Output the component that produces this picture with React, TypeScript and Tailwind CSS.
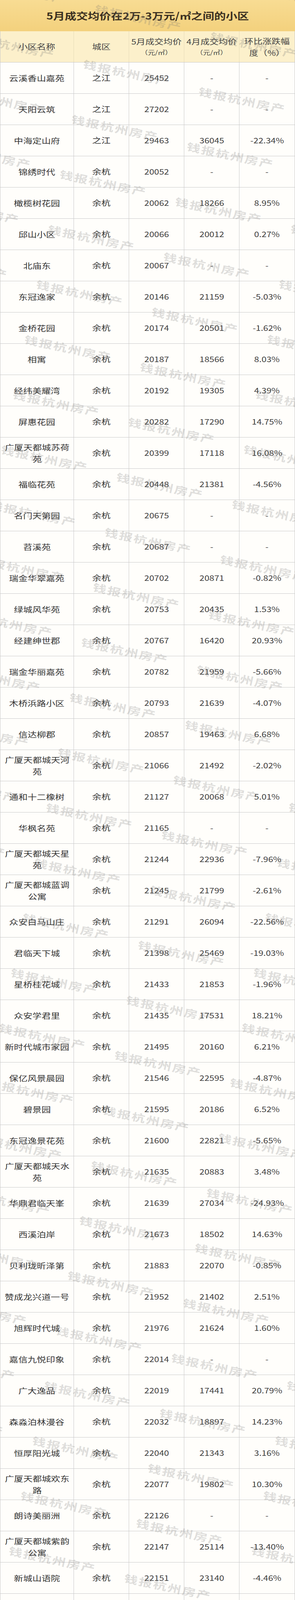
import React from 'react';

type Row = [string, string, string, string, string];

const rows: Row[] = [
    ['云溪香山嘉苑', '之江', '25452', '-', '-'],
    ['天阳云筑', '之江', '27202', '-', '-'],
    ['中海定山府', '之江', '29463', '36045', '-22.34%'],
    ['锦绣时代', '余杭', '20052', '-', '-'],
    ['橄榄树花园', '余杭', '20062', '18266', '8.95%'],
    ['邱山小区', '余杭', '20066', '20012', '0.27%'],
    ['北庙东', '余杭', '20067', '-', '-'],
    ['东冠逸家', '余杭', '20146', '21159', '-5.03%'],
    ['金桥花园', '余杭', '20174', '20501', '-1.62%'],
    ['相寓', '余杭', '20187', '18566', '8.03%'],
    ['经纬美耀湾', '余杭', '20192', '19305', '4.39%'],
    ['屏惠花园', '余杭', '20282', '17290', '14.75%'],
    ['广厦天都城苏荷苑', '余杭', '20399', '17118', '16.08%'],
    ['福临花苑', '余杭', '20448', '21381', '-4.56%'],
    ['名门天第园', '余杭', '20675', '-', '-'],
    ['苕溪苑', '余杭', '20687', '-', '-'],
    ['瑞金华翠嘉苑', '余杭', '20702', '20871', '-0.82%'],
    ['绿城风华苑', '余杭', '20753', '20435', '1.53%'],
    ['经建绅世郡', '余杭', '20767', '16420', '20.93%'],
    ['瑞金华丽嘉苑', '余杭', '20782', '21959', '-5.66%'],
    ['木桥浜路小区', '余杭', '20793', '21639', '-4.07%'],
    ['信达柳郡', '余杭', '20857', '19463', '6.68%'],
    ['广厦天都城天河苑', '余杭', '21066', '21492', '-2.02%'],
    ['通和十二橡树', '余杭', '21127', '20068', '5.01%'],
    ['华枫名苑', '余杭', '21165', '-', '-'],
    ['广厦天都城天星苑', '余杭', '21244', '22936', '-7.96%'],
    ['广厦天都城蓝调公寓', '余杭', '21245', '21799', '-2.61%'],
    ['众安白马山庄', '余杭', '21291', '26094', '-22.56%'],
    ['君临天下城', '余杭', '21398', '25469', '-19.03%'],
    ['星桥桂花城', '余杭', '21433', '21853', '-1.96%'],
    ['众安学君里', '余杭', '21435', '17531', '18.21%'],
    ['新时代城市家园', '余杭', '21495', '20160', '6.21%'],
    ['保亿风景晨园', '余杭', '21546', '22595', '-4.87%'],
    ['碧景园', '余杭', '21595', '20186', '6.52%'],
    ['东冠逸景花苑', '余杭', '21600', '22821', '-5.65%'],
    ['广厦天都城天水苑', '余杭', '21635', '20883', '3.48%'],
    ['华鼎君临天峯', '余杭', '21639', '27034', '-24.93%'],
    ['西溪泊岸', '余杭', '21673', '18502', '14.63%'],
    ['贝利珑昕泽第', '余杭', '21883', '22070', '-0.85%'],
    ['赞成龙兴道一号', '余杭', '21952', '21402', '2.51%'],
    ['旭辉时代城', '余杭', '21976', '21624', '1.60%'],
    ['嘉信九悦印象', '余杭', '22014', '-', '-'],
    ['广大逸品', '余杭', '22019', '17441', '20.79%'],
    ['森淼泊林漫谷', '余杭', '22032', '18897', '14.23%'],
    ['恒厚阳光城', '余杭', '22040', '21343', '3.16%'],
    ['广厦天都城欢东路', '余杭', '22077', '19802', '10.30%'],
    ['朗诗美丽洲', '余杭', '22126', '-', '-'],
    ['广厦天都城紫韵公寓', '余杭', '22147', '25114', '-13.40%'],
    ['新城山语院', '余杭', '22151', '23140', '-4.46%'],
    ['桂花星城', '余杭', '22251', '23905', '-7.43%'],
    ['广厦天都城爵士花园', '余杭', '22280', '20039', '10.06%'],
    ['保亿丽景山', '余杭', '22309', '24247', '-8.69%'],
    ['华庭嘉苑', '余杭', '22340', '20475', '8.35%'],
    ['凯文杭庄', '余杭', '22398', '-', '-'],
    ['德信早安', '余杭', '22446', '22105', '1.52%'],
    ['赞成檀府', '余杭', '22557', '23607', '-4.65%'],
    ['赞成乐山红叶', '余杭', '22564', '21899', '2.95%'],
    ['英特学府', '余杭', '22577', '25802', '-14.28%'],
    ['金岸提香', '余杭', '22613', '22114', '2.21%'],
    ['人和家园', '余杭', '22616', '22472', '0.64%'],
    ['佳源名城', '余杭', '22623', '20323', '10.17%'],
    ['万泰城章', '余杭', '22636', '21806', '3.67%'],
    ['南安小区', '余杭', '22697', '20882', '8.00%'],
    ['临平桂花城', '余杭', '22700', '20247', '10.81%'],
    ['广厦天都城天风苑', '余杭', '22719', '18938', '16.64%'],
    ['逸居城', '余杭', '22788', '25301', '-11.03%'],
    ['赞成香颂', '余杭', '22791', '21266', '6.69%'],
    ['怡景花城', '余杭', '22896', '22990', '-0.41%'],
    ['广厦天都城欢西路', '余杭', '22920', '-', '-'],
    ['新城都市丽景', '余杭', '22930', '19048', '16.93%'],
    ['景瑞御华府', '余杭', '22961', '22539', '1.84%'],
];

// watermark lattice, read off the picture; keep marks inside the frame
const marks: { x: number; y: number }[] = [];
for (let n = -8; n < 48; n++) {
    for (let m = -8; m < 8; m++) {
        const x = 452 - 30 * n + 295 * m;
        const y = 495 + 141 * n + 70 * m;
        if (x > -260 && x < 754 && y > -120 && y < 5790) marks.push({ x, y });
    }
}

const cols = 'grid grid-cols-[189px_141px_141px_141px_142px]';
const cell = 'flex items-center justify-center border-r border-[#c9c9c9] text-center';

function DataRow({ r }: { r: Row }) {
    const [name, area, may, apr, chg] = r;
    return (
        <div className={`${cols} h-[80px] border-b border-[#c9c9c9]`}>
            <div className={`${cell} border-l`}>
                <span className="inline-block max-w-[140px] scale-x-[1.24] leading-[30px]">{name}</span>
            </div>
            <div className={cell}>
                <span className="inline-block scale-x-[1.24]">{area}</span>
            </div>
            <div className={cell}>
                <span className="inline-block scale-x-[1.2] text-[#3d3d3d]">{may}</span>
            </div>
            <div className={cell}>
                <span className="inline-block scale-x-[1.2] text-[#3d3d3d]">{apr}</span>
            </div>
            <div className={cell}>
                <span className="inline-block scale-x-[1.2] text-[#3d3d3d]">{chg}</span>
            </div>
        </div>
    );
}

export default function App() {
    return (
        <div className="relative h-[5846px] w-[754px] overflow-hidden bg-[#fffefb] font-['Noto_Sans_CJK_SC','Liberation_Sans',sans-serif] text-[19px] text-[#333]">
            <div className="flex h-[80px] items-center justify-center bg-linear-to-b from-[#f8dc93] to-[#f3d17d]">
                <h1 className="inline-block scale-x-[1.23] text-[24px] font-bold text-[#3a2f1f]">5月成交均价在2万-3万元/㎡之间的小区</h1>
            </div>

            <div className={`${cols} h-[80px] border-b border-[#c9c9c9] bg-[#fcf0cb] text-[#444]`}>
                <div className={`${cell} border-l border-r-[#e6dbb8]`}>
                    <span className="inline-block scale-x-[1.24]">小区名称</span>
                </div>
                <div className={`${cell} border-r-[#e6dbb8]`}>
                    <span className="inline-block scale-x-[1.24]">城区</span>
                </div>
                <div className={`${cell} border-r-[#e6dbb8]`}>
                    <span className="inline-block scale-x-[1.22] leading-[26px]">
                        5月成交均价<br />
                        <span className="text-[15px]">（元/㎡）</span>
                    </span>
                </div>
                <div className={`${cell} border-r-[#e6dbb8]`}>
                    <span className="inline-block scale-x-[1.22] leading-[26px]">
                        4月成交均价<br />
                        <span className="text-[15px]">（元/㎡）</span>
                    </span>
                </div>
                <div className={cell}>
                    <span className="inline-block scale-x-[1.22] leading-[30px]">
                        环比涨跌幅<br />度（%）
                    </span>
                </div>
            </div>

            {rows.map((r) => (
                <DataRow key={r[0]} r={r} />
            ))}

            <div className="pointer-events-none absolute inset-0 overflow-hidden">
                {marks.map((p) => (
                    <span
                        key={`${p.x}-${p.y}`}
                        className="absolute origin-top-left rotate-[12deg] scale-x-[1.35] whitespace-nowrap text-[26px] font-bold tracking-[2px] text-[rgba(110,110,110,0.24)]"
                        style={{ left: p.x, top: p.y }}
                    >
                        钱报杭州房产
                    </span>
                ))}
            </div>
        </div>
    );
}
